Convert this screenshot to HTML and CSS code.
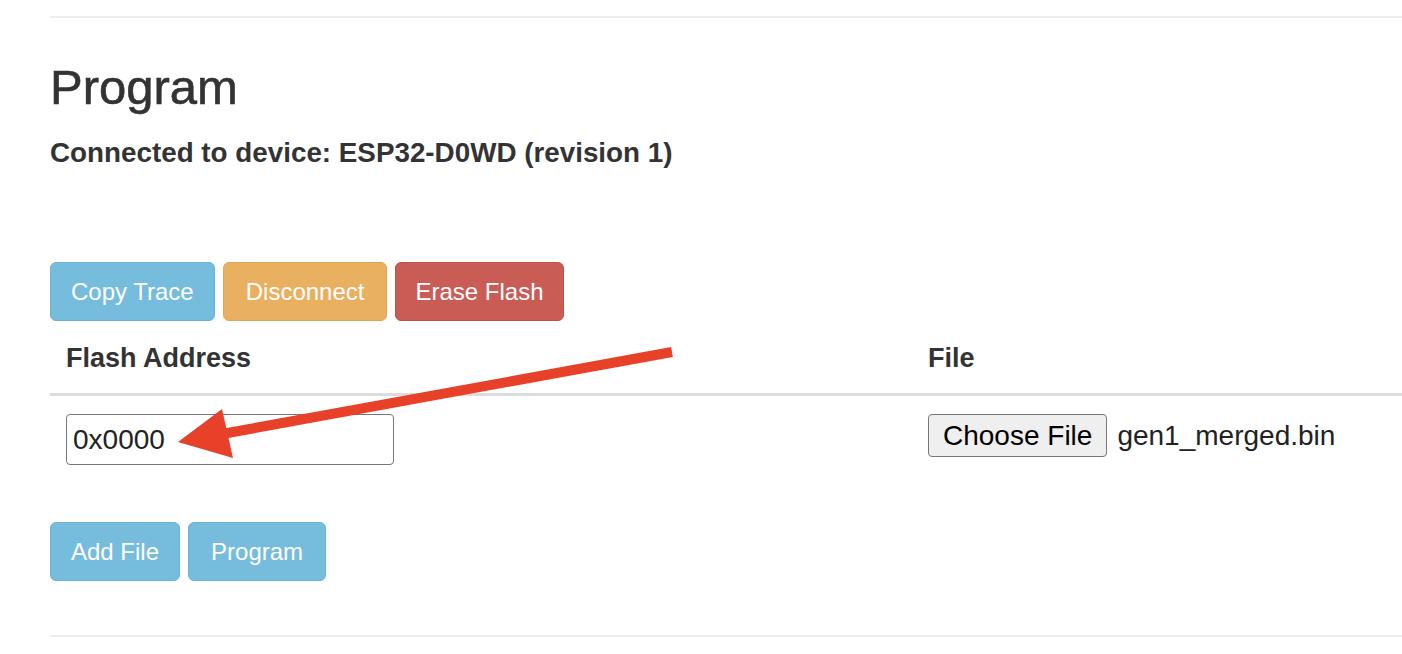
FILE: index.html
```html
<!DOCTYPE html>
<html lang="en">
<head>
<meta charset="utf-8">
<title>Program</title>
<link rel="stylesheet" href="styles.css">
</head>
<body>
<div class="page">
  <hr class="rule">
  <h2 class="title">Program</h2>
  <h4 class="device">Connected to device: ESP32-D0WD (revision 1)</h4>
  <div class="btn-row top-row">
    <button class="btn btn-info">Copy Trace</button>
    <button class="btn btn-warning">Disconnect</button>
    <button class="btn btn-danger">Erase Flash</button>
  </div>
  <table class="files">
    <thead>
      <tr>
        <th class="col-addr">Flash Address</th>
        <th>File</th>
      </tr>
    </thead>
    <tbody>
      <tr>
        <td class="col-addr"><input class="addr" type="text" value="0x0000"></td>
        <td>
          <div class="file-pick">
            <span class="choose">Choose File</span>
            <span class="fname">gen1_merged.bin</span>
          </div>
        </td>
      </tr>
    </tbody>
  </table>
  <div class="btn-row bottom-row">
    <button class="btn btn-info">Add File</button>
    <button class="btn btn-info">Program</button>
  </div>
  <hr class="rule bottom-rule">
</div>
<svg class="arrow" width="1402" height="654" viewBox="0 0 1402 654" xmlns="http://www.w3.org/2000/svg">
  <line x1="222" y1="434" x2="672" y2="352" stroke="#e8412a" stroke-width="10"/>
  <polygon points="178,442 222,409 233,458" fill="#e8412a"/>
</svg>
</body>
</html>
```

FILE: styles.css
```css
html, body {
  margin: 0;
  padding: 0;
  background: #fff;
}
body {
  font-family: "Liberation Sans", Arial, Helvetica, sans-serif;
  color: #333;
  position: relative;
  width: 1402px;
  height: 654px;
  overflow: hidden;
}
.page {
  padding: 16px 0 0 50px;
}
.rule {
  margin: 0;
  border: 0;
  border-top: 2px solid #eee;
  height: 0;
}
.title {
  margin: 43px 0 0;
  font-size: 49px;
  line-height: 52px;
  font-weight: 500;
  color: #333;
  -webkit-text-stroke: 0.6px #333;
}
.device {
  margin: 24px 0 0;
  font-size: 27.8px;
  line-height: 32px;
  font-weight: bold;
  color: #333;
}
.btn-row {
  display: flex;
  gap: 8px;
}
.top-row {
  margin-top: 93px;
}
.btn {
  height: 59px;
  padding: 0 20px;
  font-family: "Liberation Sans", Arial, Helvetica, sans-serif;
  font-size: 24px;
  line-height: 57px;
  color: #fff;
  border: 1px solid transparent;
  border-radius: 6px;
  cursor: pointer;
}
.btn-info {
  background: #76bcdc;
  border-color: #6ab3d5;
}
.btn-warning {
  background: #e8b05f;
  border-color: #e1a650;
  padding: 0 22px;
}
.btn-danger {
  background: #c95c55;
  border-color: #c0504a;
  padding: 0 19px;
}
.files {
  width: 1352px;
  border-collapse: collapse;
  margin-top: 6px;
}
.files th {
  text-align: left;
  font-size: 27px;
  line-height: 32px;
  font-weight: bold;
  padding: 15px 16px 19px;
  border-bottom: 3px solid #ddd;
  color: #333;
}
.files .col-addr {
  width: 830px;
}
.files td {
  vertical-align: top;
  padding: 18px 16px 16px;
}
.addr {
  box-sizing: border-box;
  width: 328px;
  height: 51px;
  margin: 0;
  padding: 0 6px;
  border: 1.5px solid #777;
  border-radius: 4px;
  font-family: "Liberation Sans", Arial, Helvetica, sans-serif;
  font-size: 28px;
  color: #222;
  background: #fff;
  outline: none;
}
.file-pick {
  display: flex;
  align-items: center;
  gap: 10px;
}
.choose {
  box-sizing: border-box;
  height: 43px;
  padding: 0 14px;
  display: flex;
  align-items: center;
  background: #efefef;
  border: 1px solid #767676;
  border-radius: 4px;
  font-size: 28px;
  color: #000;
}
.fname {
  font-size: 28px;
  color: #222;
}
.bottom-row {
  margin-top: 41px;
}
.bottom-row .btn + .btn {
  padding: 0 22px;
}
.bottom-rule {
  margin-top: 54px;
}
.arrow {
  position: absolute;
  top: 0;
  left: 0;
  pointer-events: none;
}
```
